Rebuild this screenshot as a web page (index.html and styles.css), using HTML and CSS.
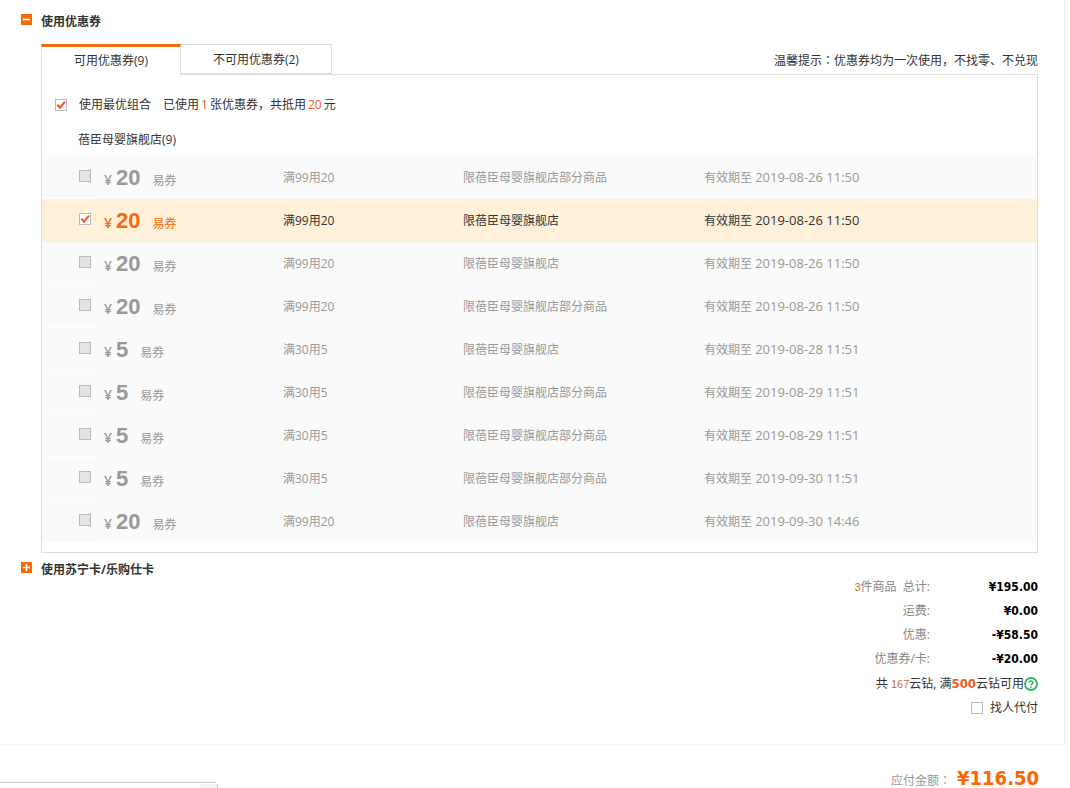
FILE: index.html
```
<!DOCTYPE html>
<html lang="zh-CN">
<head>
<meta charset="utf-8">
<title>使用优惠券</title>
<link rel="stylesheet" href="styles.css">
</head>
<body>
<main class="checkout">
  <section>
    <h2 class="section-title">
      <button class="toggle" type="button" aria-label="收起优惠券"><svg viewBox="0 0 11 11"><path d="M2 5.5h7" stroke="#fff" stroke-width="1.6"/></svg></button>
      使用优惠券
    </h2>
    <div class="coupons">
      <div class="tabbar">
        <div class="tabs" role="tablist">
          <button class="tab tab-active" type="button" role="tab" aria-selected="true">可用优惠券(9)</button>
          <button class="tab" type="button" role="tab" aria-selected="false">不可用优惠券(2)</button>
        </div>
        <p class="tip">温馨提示<span class="colon" lang="zh-TW">：</span>优惠券均为一次使用，不找零、不兑现</p>
      </div>
      <div class="panel">
        <div class="best">
          <input class="check" type="checkbox" id="best" checked>
          <label for="best">使用最优组合</label>
          <span>已使用<em>1</em>张优惠券，共抵用<em>20</em>元</span>
        </div>
        <h3 class="shop">蓓臣母婴旗舰店(9)</h3>
        <table class="list">
          <colgroup><col class="col-check"><col class="col-price"><col class="col-rule"><col class="col-scope"><col></colgroup>
          <tbody>
            <tr><td><input class="check" type="checkbox" id="c1" disabled></td><td><label class="price" for="c1"><i>¥</i><b>20</b><span>易券</span></label></td><td>满99用20</td><td>限蓓臣母婴旗舰店部分商品</td><td>有效期至 <time>2019-08-26 11:50</time></td></tr>
            <tr class="selected"><td><input class="check" type="checkbox" id="c2" checked></td><td><label class="price" for="c2"><i>¥</i><b>20</b><span>易券</span></label></td><td>满99用20</td><td>限蓓臣母婴旗舰店</td><td>有效期至 <time>2019-08-26 11:50</time></td></tr>
            <tr><td><input class="check" type="checkbox" id="c3" disabled></td><td><label class="price" for="c3"><i>¥</i><b>20</b><span>易券</span></label></td><td>满99用20</td><td>限蓓臣母婴旗舰店</td><td>有效期至 <time>2019-08-26 11:50</time></td></tr>
            <tr><td><input class="check" type="checkbox" id="c4" disabled></td><td><label class="price" for="c4"><i>¥</i><b>20</b><span>易券</span></label></td><td>满99用20</td><td>限蓓臣母婴旗舰店部分商品</td><td>有效期至 <time>2019-08-26 11:50</time></td></tr>
            <tr><td><input class="check" type="checkbox" id="c5" disabled></td><td><label class="price" for="c5"><i>¥</i><b>5</b><span>易券</span></label></td><td>满30用5</td><td>限蓓臣母婴旗舰店</td><td>有效期至 <time>2019-08-28 11:51</time></td></tr>
            <tr><td><input class="check" type="checkbox" id="c6" disabled></td><td><label class="price" for="c6"><i>¥</i><b>5</b><span>易券</span></label></td><td>满30用5</td><td>限蓓臣母婴旗舰店部分商品</td><td>有效期至 <time>2019-08-29 11:51</time></td></tr>
            <tr><td><input class="check" type="checkbox" id="c7" disabled></td><td><label class="price" for="c7"><i>¥</i><b>5</b><span>易券</span></label></td><td>满30用5</td><td>限蓓臣母婴旗舰店部分商品</td><td>有效期至 <time>2019-08-29 11:51</time></td></tr>
            <tr><td><input class="check" type="checkbox" id="c8" disabled></td><td><label class="price" for="c8"><i>¥</i><b>5</b><span>易券</span></label></td><td>满30用5</td><td>限蓓臣母婴旗舰店部分商品</td><td>有效期至 <time>2019-09-30 11:51</time></td></tr>
            <tr><td><input class="check" type="checkbox" id="c9" disabled></td><td><label class="price" for="c9"><i>¥</i><b>20</b><span>易券</span></label></td><td>满99用20</td><td>限蓓臣母婴旗舰店</td><td>有效期至 <time>2019-09-30 14:46</time></td></tr>
          </tbody>
        </table>
      </div>
    </div>
  </section>
  <h2 class="section-title section-card">
    <button class="toggle" type="button" aria-label="展开苏宁卡"><svg viewBox="0 0 11 11"><path d="M2 5.5h7M5.5 2v7" stroke="#fff" stroke-width="1.6"/></svg></button>
    使用苏宁卡/乐购仕卡
  </h2>
  <section class="summary">
    <dl class="totals">
      <dt><span class="count">3</span>件商品&nbsp; 总计:</dt><dd>¥195.00</dd>
      <dt>运费:</dt><dd>¥0.00</dd>
      <dt>优惠:</dt><dd>-¥58.50</dd>
      <dt>优惠券/卡:</dt><dd>-¥20.00</dd>
    </dl>
    <p class="line">共&nbsp;<span class="count">167</span>云钻, 满<strong>500</strong>云钻可用<button class="help" type="button" aria-label="帮助"><svg viewBox="0 0 14 14" fill="none" stroke="#2fb866"><circle cx="7" cy="7" r="6" stroke-width="1.8"/><path d="M5 5.7C5 3.4 9 3.4 9 5.6C9 7 7 6.8 7 8.5M7 9.4v1.5" stroke-width="1.5"/></svg></button></p>
    <p class="line"><input class="check" type="checkbox" id="proxy"><label class="proxy" for="proxy">找人代付</label></p>
  </section>
</main>
<footer class="payable">
  <div class="float-tip"></div>
  <p class="due"><span>应付金额<span class="colon" lang="zh-TW">：</span></span><strong>¥116.50</strong></p>
</footer>
</body>
</html>
```
FILE: styles.css
```
* { box-sizing: border-box; }
html, body { height: 100%; }
body {
  margin: 0;
  overflow: hidden;
  background: #fff;
  color: #333;
  font: 12px/16px "Open Sans", "Noto Sans CJK SC", sans-serif;
}
h2, h3, p, dl, dd { margin: 0; }
button, input { font: inherit; color: inherit; margin: 0; padding: 0; }
em, i { font-style: normal; }
.colon { font-family: "Noto Sans CJK TC", sans-serif; line-height: 1; }

.checkout {
  margin-right: 5px;
  padding: 14px 26px 24px 21px;
  border: solid #eee;
  border-width: 0 1px 1px 0;
}
.section-title {
  display: flex;
  gap: 9px;
  font-size: 12px;
  line-height: 16px;
}
.section-card { margin: 9px 0 -3px; }
.toggle {
  width: 11px;
  height: 11px;
  border: 0;
  background: #f56a0c;
}
.toggle svg, .help svg { display: block; width: 100%; height: 100%; }

.coupons { margin: 14px 0 0 20px; }
.tabbar { display: flex; justify-content: space-between; height: 30px; }
.tabs { display: flex; }
.tab {
  height: 30px;
  padding: 1px 32px 0;
  border: 1px solid #ddd;
  border-left: 0;
  background: #fff;
}
.tab-active {
  position: relative;
  height: 31px;
  padding: 0 32px;
  border-width: 3px 1px 0;
  border-style: solid;
  border-color: #f06a0f #ddd #fff;
}
.tip { padding-top: 9px; }
.panel { padding: 22px 0 9px; border: 1px solid #ddd; }
.best { display: flex; align-items: center; gap: 12px; padding-left: 13px; }
.best em { padding: 0 2px; color: #f15a24; }
.shop { margin: 19px 0 8px 36px; font-size: 12px; font-weight: normal; }

.check {
  appearance: none;
  flex: none;
  display: block;
  width: 12px;
  height: 12px;
  border: 1px solid #bbb;
  background: #fff;
}
.check:disabled { background: #e4e4e4; }
.check:checked {
  background: #fff url("data:image/svg+xml,%3Csvg xmlns='http://www.w3.org/2000/svg' viewBox='0 0 10 10'%3E%3Cpath d='M1.3 4.8L4 7.6L9 1.6' fill='none' stroke='%23f15a24' stroke-width='2.2'/%3E%3C/svg%3E");
}

.list { width: 100%; border-collapse: separate; border-spacing: 0; table-layout: fixed; color: #999; }
.col-check { width: 54px; }
.col-price { width: 187px; }
.col-rule { width: 180px; }
.col-scope { width: 241px; }
.list td { height: 43px; padding: 0; background: #fafafa; }
.list td:first-child { padding: 0 0 3px 37px; border-bottom: 1px solid #fff; }
.list .selected td { background: #fff0da; color: #333; }
.list .selected td:first-child { border-color: #fff0da; }
.list time { font-size: 13px; }
.price { display: flex; align-items: baseline; padding-left: 8px; }
.price i { width: 12px; font-size: 14px; font-weight: 600; }
.price b { font: bold 22px/26px "Liberation Sans", sans-serif; }
.price span { padding-left: 12px; }
.list .selected .price { color: #f56a0c; }

.summary { display: flex; flex-direction: column; align-items: flex-end; line-height: 24px; }
.totals { display: grid; grid-template-columns: auto 105px; text-align: right; }
.totals dt { padding-right: 3px; color: #888; }
.totals dd { color: #000; font-family: "DejaVu Sans Condensed", "DejaVu Sans", sans-serif; font-weight: bold; }
.count { color: #c9712b; font-family: "Liberation Sans", sans-serif; font-size: 11px; }
.line { display: flex; align-items: center; height: 24px; white-space: pre; }
.totals + .line { margin-top: 1px; }
.line strong { color: #f15a24; font-family: "DejaVu Sans Condensed", "DejaVu Sans", sans-serif; font-size: 13px; }
.help { width: 14px; height: 14px; border: 0; background: none; }
.proxy { padding-left: 7px; }

.payable { display: flex; justify-content: space-between; align-items: flex-start; padding-right: 31px; }
.float-tip {
  display: flex;
  justify-content: flex-end;
  width: 216px;
  height: 24px;
  margin-top: 37px;
  padding-top: 1px;
  border-top: 1px solid #ccc;
}
.float-tip::after {
  content: "";
  width: 17px;
  margin-right: -2px;
  border-right: 1px solid #ccc;
  background: #f4f4f4;
}
.due { display: flex; align-items: baseline; gap: 6px; padding-top: 17px; color: #999; line-height: 32px; }
.due strong { color: #f60; font: bold 20px/32px "DejaVu Sans Condensed", "DejaVu Sans", sans-serif; }
```
